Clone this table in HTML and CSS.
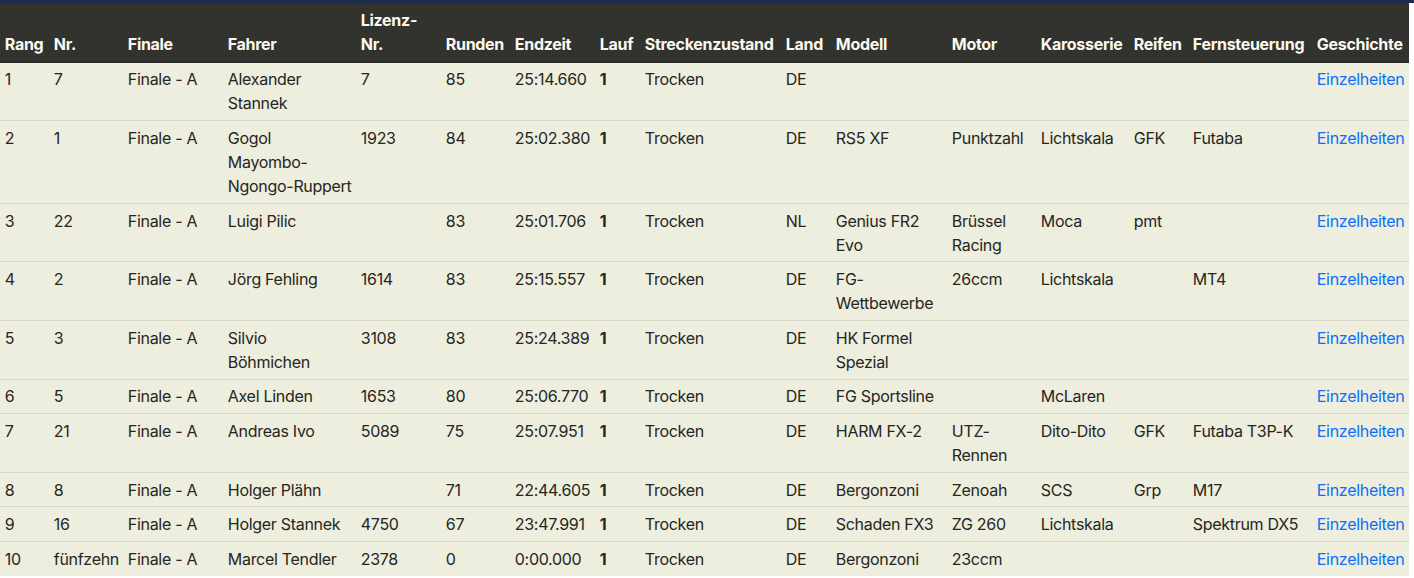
FILE: index.html
```html
<!DOCTYPE html>
<html lang="de">
<head>
<meta charset="utf-8">
<title>Ergebnisse</title>
<link rel="stylesheet" href="styles.css">
</head>
<body>
<div class="topbar"></div>
<table class="results">
  <colgroup>
    <col class="c-rang"><col class="c-nr"><col class="c-finale"><col class="c-fahrer"><col class="c-lizenz"><col class="c-runden"><col class="c-endzeit"><col class="c-lauf"><col class="c-strecke"><col class="c-land"><col class="c-modell"><col class="c-motor"><col class="c-karo"><col class="c-reifen"><col class="c-fern"><col class="c-gesch">
  </colgroup>
  <thead>
    <tr>
      <th>Rang</th><th>Nr.</th><th>Finale</th><th>Fahrer</th><th>Lizenz-Nr.</th><th>Runden</th><th>Endzeit</th><th>Lauf</th><th>Streckenzustand</th><th>Land</th><th>Modell</th><th>Motor</th><th>Karosserie</th><th>Reifen</th><th>Fernsteuerung</th><th>Geschichte</th>
    </tr>
  </thead>
  <tbody>
    <tr><td>1</td><td>7</td><td>Finale - A</td><td>Alexander Stannek</td><td>7</td><td>85</td><td>25:14.660</td><td class="b">1</td><td>Trocken</td><td>DE</td><td></td><td></td><td></td><td></td><td></td><td><a href="#">Einzelheiten</a></td></tr>
    <tr><td>2</td><td>1</td><td>Finale - A</td><td>Gogol Mayombo-<span class="nowrap">Ngongo-Ruppert</span></td><td>1923</td><td>84</td><td>25:02.380</td><td class="b">1</td><td>Trocken</td><td>DE</td><td>RS5 XF</td><td>Punktzahl</td><td>Lichtskala</td><td>GFK</td><td>Futaba</td><td><a href="#">Einzelheiten</a></td></tr>
    <tr><td>3</td><td>22</td><td>Finale - A</td><td>Luigi Pilic</td><td></td><td>83</td><td>25:01.706</td><td class="b">1</td><td>Trocken</td><td>NL</td><td>Genius FR2 Evo</td><td>Brüssel Racing</td><td>Moca</td><td>pmt</td><td></td><td><a href="#">Einzelheiten</a></td></tr>
    <tr><td>4</td><td>2</td><td>Finale - A</td><td>Jörg Fehling</td><td>1614</td><td>83</td><td>25:15.557</td><td class="b">1</td><td>Trocken</td><td>DE</td><td>FG-Wettbewerbe</td><td>26ccm</td><td>Lichtskala</td><td></td><td>MT4</td><td><a href="#">Einzelheiten</a></td></tr>
    <tr><td>5</td><td>3</td><td>Finale - A</td><td>Silvio Böhmichen</td><td>3108</td><td>83</td><td>25:24.389</td><td class="b">1</td><td>Trocken</td><td>DE</td><td>HK Formel Spezial</td><td></td><td></td><td></td><td></td><td><a href="#">Einzelheiten</a></td></tr>
    <tr><td>6</td><td>5</td><td>Finale - A</td><td>Axel Linden</td><td>1653</td><td>80</td><td>25:06.770</td><td class="b">1</td><td>Trocken</td><td>DE</td><td>FG Sportsline</td><td></td><td>McLaren</td><td></td><td></td><td><a href="#">Einzelheiten</a></td></tr>
    <tr><td>7</td><td>21</td><td>Finale - A</td><td>Andreas Ivo</td><td>5089</td><td>75</td><td>25:07.951</td><td class="b">1</td><td>Trocken</td><td>DE</td><td>HARM FX-2</td><td>UTZ-Rennen</td><td>Dito-Dito</td><td>GFK</td><td>Futaba T3P-K</td><td><a href="#">Einzelheiten</a></td></tr>
    <tr><td>8</td><td>8</td><td>Finale - A</td><td>Holger Plähn</td><td></td><td>71</td><td>22:44.605</td><td class="b">1</td><td>Trocken</td><td>DE</td><td>Bergonzoni</td><td>Zenoah</td><td>SCS</td><td>Grp</td><td>M17</td><td><a href="#">Einzelheiten</a></td></tr>
    <tr><td>9</td><td>16</td><td>Finale - A</td><td>Holger Stannek</td><td>4750</td><td>67</td><td>23:47.991</td><td class="b">1</td><td>Trocken</td><td>DE</td><td>Schaden FX3</td><td>ZG 260</td><td>Lichtskala</td><td></td><td>Spektrum DX5</td><td><a href="#">Einzelheiten</a></td></tr>
    <tr><td>10</td><td>fünfzehn</td><td>Finale - A</td><td>Marcel Tendler</td><td>2378</td><td>0</td><td>0:00.000</td><td class="b">1</td><td>Trocken</td><td>DE</td><td>Bergonzoni</td><td>23ccm</td><td></td><td></td><td></td><td><a href="#">Einzelheiten</a></td></tr>
  </tbody>
</table>
</body>
</html>
```

FILE: styles.css
```css
html, body {
  margin: 0;
  padding: 0;
  background: #ffffff;
}

body {
  font-family: Inter, "Liberation Sans", sans-serif;
  font-size: 16px;
  line-height: 24px;
  letter-spacing: -0.3px;
  color: #26251f;
}

.topbar {
  height: 3px;
  background: #1c2d4f;
}

.results {
  width: 1409px;
  table-layout: fixed;
  border-collapse: collapse;
  background: #edeedd;
}

.c-rang { width: 49px; }
.c-nr { width: 74px; }
.c-finale { width: 100px; }
.c-fahrer { width: 133px; }
.c-lizenz { width: 85px; }
.c-runden { width: 69px; }
.c-endzeit { width: 85px; }
.c-lauf { width: 45px; }
.c-strecke { width: 141px; }
.c-land { width: 50px; }
.c-modell { width: 116px; }
.c-motor { width: 89px; }
.c-karo { width: 93px; }
.c-reifen { width: 59px; }
.c-fern { width: 124px; }
.c-gesch { width: 97px; }

.results th,
.results td {
  padding: 4.8px;
  text-align: left;
  vertical-align: top;
}

.results th {
  vertical-align: bottom;
  background: #32332e;
  color: #fbf9ef;
  font-weight: 700;
  border-bottom: 2px solid #2a2b26;
}

.results td {
  border-top: 1px solid #d7d8c8;
}

.results tbody tr:first-child td {
  border-top: 0;
}

.results td.b {
  font-weight: 700;
}

.results a {
  color: #0a6efc;
  text-decoration: none;
}

.nowrap {
  white-space: nowrap;
}
```
